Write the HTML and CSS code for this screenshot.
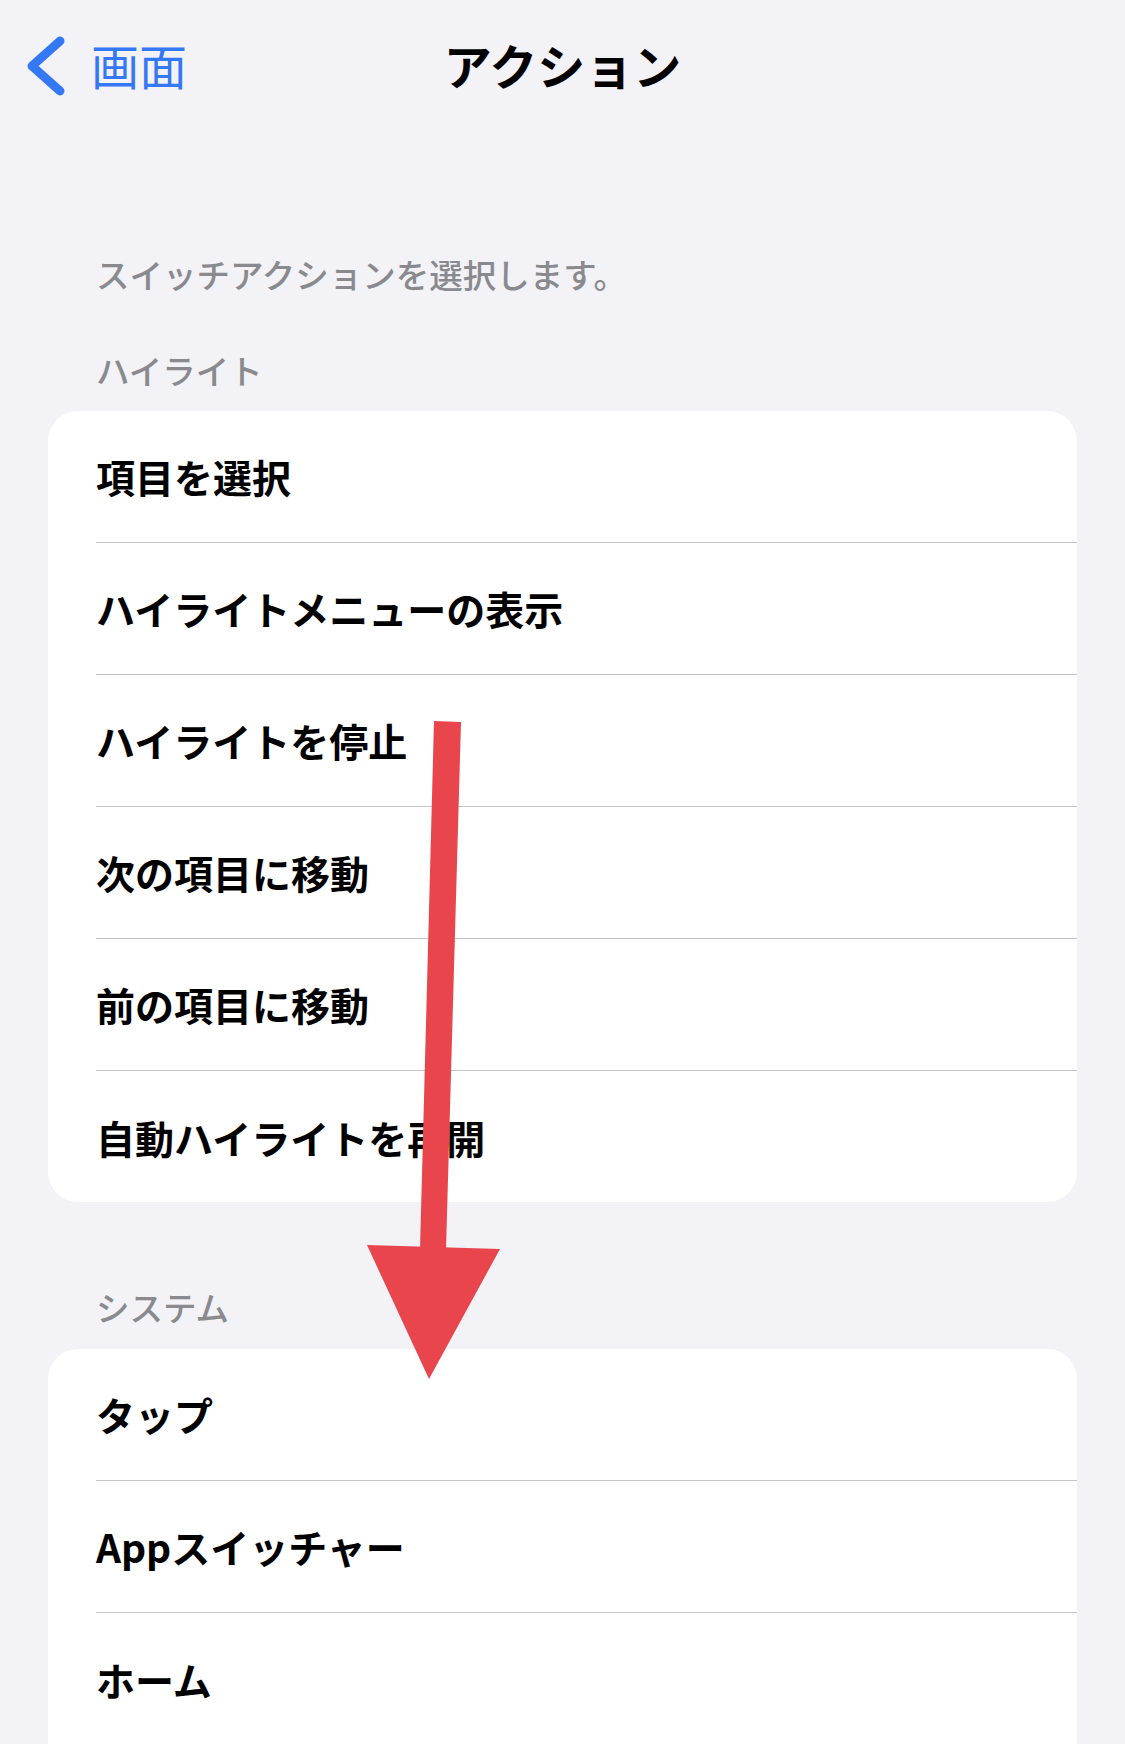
FILE: index.html
```html
<!DOCTYPE html>
<html lang="ja">
<head>
<meta charset="utf-8">
<title>アクション</title>
<link rel="stylesheet" href="styles.css">
</head>
<body>
<div class="page">
  <header class="nav">
    <div class="nav-back">
      <svg class="chevron" width="44" height="70" viewBox="0 0 44 70">
        <polyline points="33,5 5,30 33,55" transform="translate(0,5)" fill="none" stroke="#3478f6" stroke-width="9" stroke-linecap="round" stroke-linejoin="round"/>
      </svg>
      <span class="nav-back-label">画面</span>
    </div>
    <h1 class="nav-title">アクション</h1>
    <div class="nav-spacer"></div>
  </header>

  <main class="content">
    <p class="intro">スイッチアクションを選択します。</p>

    <h2 class="section-header section-header--first">ハイライト</h2>
    <ul class="card">
      <li class="row"><span class="row-inner">項目を選択</span></li>
      <li class="row"><span class="row-inner">ハイライトメニューの表示</span></li>
      <li class="row"><span class="row-inner">ハイライトを停止</span></li>
      <li class="row"><span class="row-inner">次の項目に移動</span></li>
      <li class="row"><span class="row-inner">前の項目に移動</span></li>
      <li class="row"><span class="row-inner">自動ハイライトを再開</span></li>
    </ul>

    <h2 class="section-header">システム</h2>
    <ul class="card card--second">
      <li class="row"><span class="row-inner">タップ</span></li>
      <li class="row"><span class="row-inner">Appスイッチャー</span></li>
      <li class="row"><span class="row-inner">ホーム</span></li>
    </ul>
  </main>

  <svg class="annotation" width="1125" height="1744" viewBox="0 0 1125 1744">
    <polygon points="434,721 461,722 446,1250 420,1250" fill="#e8464c"/>
    <polygon points="367,1245 500,1249 429,1379" fill="#e8464c"/>
  </svg>
</div>
</body>
</html>
```

FILE: styles.css
```css
* {
  box-sizing: border-box;
}

html, body {
  margin: 0;
  padding: 0;
}

body {
  background: #f2f2f7;
  font-family: "Noto Sans CJK JP", "Noto Sans", sans-serif;
  color: #000;
  width: 1125px;
  height: 1744px;
  overflow: hidden;
}

.page {
  position: relative;
  width: 1125px;
  min-height: 1744px;
}

.nav {
  height: 127px;
  display: grid;
  grid-template-columns: 1fr auto 1fr;
  align-items: center;
}

.nav-back {
  display: flex;
  align-items: center;
  padding-left: 27px;
  gap: 20px;
  color: #3478f6;
}

.chevron {
  display: block;
  margin-top: 4px;
}

.nav-back-label {
  font-size: 48px;
  line-height: 56px;
  font-weight: 400;
}

.nav-title {
  margin: 0;
  font-size: 48px;
  line-height: 56px;
  font-weight: 700;
  text-align: center;
}

.content {
  padding: 0 48px;
}

.intro {
  margin: 127px 0 0;
  padding-left: 48px;
  font-size: 33.5px;
  line-height: 40px;
  color: #8a8a8e;
  font-weight: 500;
}

.section-header {
  margin: 85px 0 0;
  padding-left: 48px;
  font-size: 33.5px;
  line-height: 40px;
  color: #8a8a8e;
  font-weight: 500;
}

.section-header--first {
  margin-top: 56px;
}

.card {
  list-style: none;
  margin: 21px 0 0;
  padding: 0;
  background: #fff;
  border-radius: 30px;
  overflow: hidden;
}

.card--second {
  margin-top: 22px;
  border-bottom-left-radius: 0;
  border-bottom-right-radius: 0;
}

.row {
  display: flex;
  padding-left: 48px;
}

.row-inner {
  flex: 1;
  height: 132px;
  display: flex;
  align-items: center;
  border-bottom: 1px solid #c6c6c8;
  font-size: 39px;
  font-weight: 600;
  line-height: 46px;
  padding-bottom: 1px;
}

.row:last-child .row-inner {
  border-bottom: none;
  height: 131px;
  padding-bottom: 0;
}

.annotation {
  position: absolute;
  left: 0;
  top: 0;
  pointer-events: none;
}
```
